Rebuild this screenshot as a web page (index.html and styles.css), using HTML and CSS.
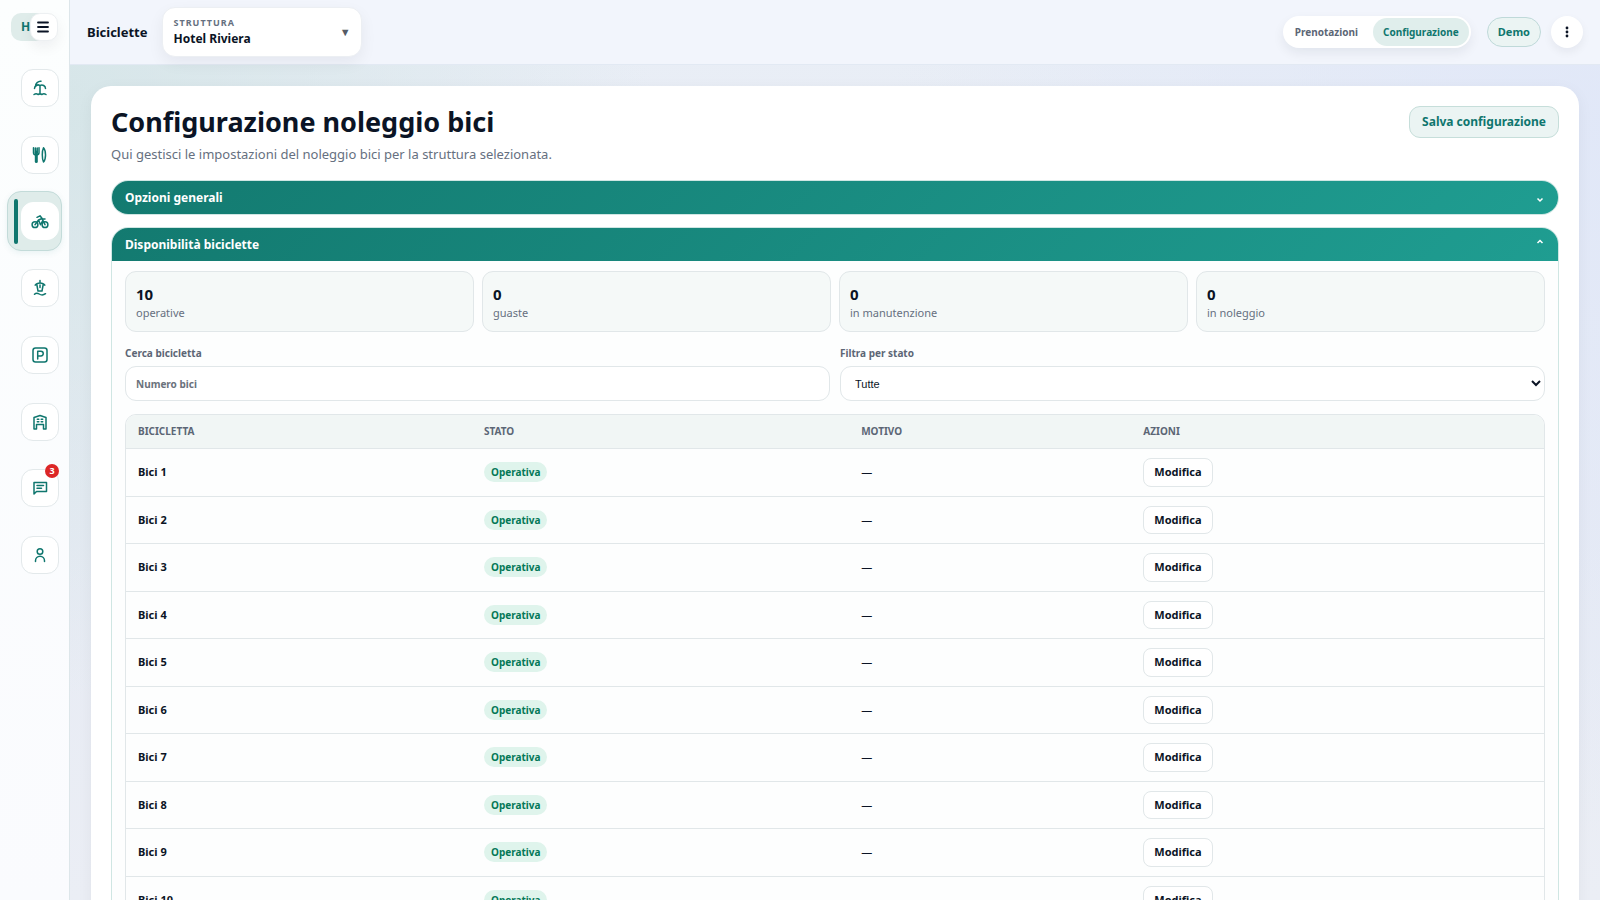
FILE: index.html
```html
<!DOCTYPE html>
<html lang="it">
<head>
<meta charset="utf-8">
<meta name="viewport" content="width=device-width, initial-scale=1">
<title>Configurazione noleggio bici</title>
<link rel="stylesheet" href="styles.css">
</head>
<body>
<div class="shell">
  <aside class="sidebar">
    <div class="brand">
      <span class="brand-mark">H</span>
      <button class="menu-btn" type="button" aria-label="Menu"><svg viewBox="0 0 12 12" width="12" height="12"><path d="M1 1.500h10M1 6h10M1 10.500h10" stroke="currentColor" stroke-width="1.8" stroke-linecap="round"/></svg></button>
    </div>
    <nav class="side-nav" aria-label="Sezioni">
      <a class="nav-item" href="#" aria-label="Spiaggia"><span class="nav-icon"><svg viewBox="0 0 18 18"><path d="M9 6.500V15M3 15.500c1.500-1 2.800-1 4 0 1.300-.8 2.700-.8 4 0 1.200-1 2.500-1 4 0M3.500 9.500C3.500 7 6.500 5 9 6.500c2.500-1.500 5.500.5 5.500 3M9 6.500C7.500 5.500 5.500 6 4.500 7.500 4 4.500 7.500 1.800 10 2.200"/></svg></span></a>
      <a class="nav-item" href="#" aria-label="Ristorante"><span class="nav-icon"><svg viewBox="0 0 18 18"><path d="M2.500 1.800v5c0 1.500 1 2.300 2.800 2.300S8 8.300 8 6.800v-5M4.400 2v5M6.200 2v5"/><path d="M5.300 6v9.500" stroke-width="3"/><path d="M12.500 1.800c-1.600 3-1.600 11 0 14.200 2.700-3 2.700-11.200 0-14.200z"/></svg></span></a>
      <a class="nav-item active" href="#" aria-label="Biciclette" aria-current="page"><span class="nav-icon"><svg viewBox="0 0 18 18"><circle cx="4" cy="12.700" r="2.900"/><circle cx="14" cy="12.700" r="2.900"/><path d="M4 12.700 7.500 8l2 4.700M7.500 8 11 6.500l3 6.200M9.500 12.700l2.300-4.200M6 5.300l3-1.500 2.500 3.200H14"/></svg></span></a>
      <a class="nav-item" href="#" aria-label="Piscina"><span class="nav-icon"><svg viewBox="0 0 18 18"><path d="M9 1.500v2.300M4.200 6.200C6 3.200 12 3.200 13.800 6.200M5.800 5.500 7 12h4l1.200-6.500M9 6v2.500M3.500 15.300c1.700-1.800 3.200-1.300 4.700-.3s3.700 1.800 6.300-.3"/></svg></span></a>
      <a class="nav-item" href="#" aria-label="Parcheggio"><span class="nav-icon"><svg viewBox="0 0 18 18"><rect x="2" y="2" width="14" height="14" rx="2.500"/><path d="M6.700 13V5.200h3.200a2.300 2.300 0 0 1 0 4.700H6.700"/></svg></span></a>
      <a class="nav-item" href="#" aria-label="Struttura"><span class="nav-icon"><svg viewBox="0 0 18 18"><path d="M3 16V4.500L9 2.500l6 2V16M3 16h2.500v-4.500h7V16H15M6.300 6.200h1.500M10.200 6.200h1.500M6.300 8.800h1.500M10.200 8.800h1.500"/></svg></span></a>
      <a class="nav-item" href="#" aria-label="Messaggi"><span class="nav-icon"><svg viewBox="0 0 18 18"><path d="M3 15V3.500h12.500v9H5.500L3 15zM6 6.500h6.500M6 9.300h4.500"/></svg><span class="badge">3</span></span></a>
      <a class="nav-item" href="#" aria-label="Profilo"><span class="nav-icon"><svg viewBox="0 0 18 18"><circle cx="9" cy="5.500" r="2.800"/><path d="M4.500 15.500v-.8a4.500 4.500 0 0 1 9 0v.8"/></svg></span></a>
    </nav>
  </aside>

  <div class="workspace">
    <header class="topbar">
      <strong class="section-name">Biciclette</strong>
      <div class="property">
        <label class="property-label" for="property">Struttura</label>
        <select class="property-select" id="property"><option>Hotel Riviera</option></select>
        <span class="property-arrow" aria-hidden="true">▼</span>
      </div>
      <div class="top-actions">
        <nav class="tabs" aria-label="Vista">
          <a class="tab" href="#">Prenotazioni</a>
          <a class="tab selected" href="#" aria-current="page">Configurazione</a>
        </nav>
        <button class="demo" type="button">Demo</button>
        <button class="more" type="button" aria-label="Altro"><svg viewBox="0 0 4 12" width="4" height="12" fill="currentColor"><circle cx="2" cy="2" r="1.400"/><circle cx="2" cy="6" r="1.400"/><circle cx="2" cy="10" r="1.400"/></svg></button>
      </div>
    </header>

    <main class="content">
      <section class="card">
        <div class="card-head">
          <div>
            <h1 class="title">Configurazione noleggio bici</h1>
            <p class="subtitle">Qui gestisci le impostazioni del noleggio bici per la struttura selezionata.</p>
          </div>
          <button class="save" type="button">Salva configurazione</button>
        </div>

        <section class="panel">
          <button class="panel-head" type="button" aria-expanded="false">Opzioni generali<svg class="chev chev-down" viewBox="0 0 8 6" width="8" height="6"><path d="M1.500 1.500 4 4l2.500-2.500"/></svg></button>
        </section>

        <section class="panel">
          <button class="panel-head" type="button" aria-expanded="true">Disponibilità biciclette<svg class="chev chev-up" viewBox="0 0 8 6" width="8" height="6"><path d="M1.500 4 4 1.500 6.500 4"/></svg></button>
          <div class="panel-body">
            <div class="stats">
              <div class="stat"><strong class="stat-num">10</strong><span class="stat-label">operative</span></div>
              <div class="stat"><strong class="stat-num">0</strong><span class="stat-label">guaste</span></div>
              <div class="stat"><strong class="stat-num">0</strong><span class="stat-label">in manutenzione</span></div>
              <div class="stat"><strong class="stat-num">0</strong><span class="stat-label">in noleggio</span></div>
            </div>
            <div class="filters">
              <div class="field">
                <label class="field-label" for="search">Cerca bicicletta</label>
                <input class="control" id="search" type="text" placeholder="Numero bici">
              </div>
              <div class="field">
                <label class="field-label" for="state">Filtra per stato</label>
                <select class="control control-select" id="state"><option>Tutte</option></select>
              </div>
            </div>
            <div class="table-wrap">
              <table class="bikes">
                <colgroup><col class="col-bike"><col class="col-state"><col class="col-reason"><col class="col-actions"></colgroup>
                <thead><tr><th>Bicicletta</th><th>Stato</th><th>Motivo</th><th>Azioni</th></tr></thead>
                <tbody>
                  <tr><td class="bike">Bici 1</td><td><span class="pill">Operativa</span></td><td>—</td><td><button class="edit" type="button">Modifica</button></td></tr>
                  <tr><td class="bike">Bici 2</td><td><span class="pill">Operativa</span></td><td>—</td><td><button class="edit" type="button">Modifica</button></td></tr>
                  <tr><td class="bike">Bici 3</td><td><span class="pill">Operativa</span></td><td>—</td><td><button class="edit" type="button">Modifica</button></td></tr>
                  <tr><td class="bike">Bici 4</td><td><span class="pill">Operativa</span></td><td>—</td><td><button class="edit" type="button">Modifica</button></td></tr>
                  <tr><td class="bike">Bici 5</td><td><span class="pill">Operativa</span></td><td>—</td><td><button class="edit" type="button">Modifica</button></td></tr>
                  <tr><td class="bike">Bici 6</td><td><span class="pill">Operativa</span></td><td>—</td><td><button class="edit" type="button">Modifica</button></td></tr>
                  <tr><td class="bike">Bici 7</td><td><span class="pill">Operativa</span></td><td>—</td><td><button class="edit" type="button">Modifica</button></td></tr>
                  <tr><td class="bike">Bici 8</td><td><span class="pill">Operativa</span></td><td>—</td><td><button class="edit" type="button">Modifica</button></td></tr>
                  <tr><td class="bike">Bici 9</td><td><span class="pill">Operativa</span></td><td>—</td><td><button class="edit" type="button">Modifica</button></td></tr>
                  <tr><td class="bike">Bici 10</td><td><span class="pill">Operativa</span></td><td>—</td><td><button class="edit" type="button">Modifica</button></td></tr>
                </tbody>
              </table>
            </div>
          </div>
        </section>
      </section>
    </main>
  </div>
</div>
</body>
</html>
```

FILE: styles.css
```css
:root {
  --teal: #0f766e;
  --ink: #0b1425;
  --muted: #667080;
  --line: #e1e7e9;
  --soft: #ebf4f3;
}

* { box-sizing: border-box; }

body {
  margin: 0;
  color: var(--ink);
  font: 12px/18px "Noto Sans", sans-serif;
}

button, input { font: inherit; color: inherit; }
button { cursor: pointer; }
a { color: inherit; text-decoration: none; }

.shell {
  display: flex;
  height: 100vh;
  overflow: hidden;
  background:
    radial-gradient(circle at 4% 12%, rgba(208, 227, 228, .75), transparent 34%),
    radial-gradient(circle at 100% 14%, rgba(224, 231, 248, .9), transparent 40%),
    linear-gradient(180deg, #e9eef6 0%, #e7ebf4 60%, #ebeef5 100%);
}

.sidebar {
  flex: none;
  width: 70px;
  border-right: 1px solid #dde6ea;
  background: linear-gradient(180deg, #fcfefe, #fafbfe);
}

.brand {
  display: flex;
  align-items: center;
  height: 28px;
  margin: 13px 0 0 11px;
}

.brand-mark {
  width: 28px;
  padding-left: 10px;
  border-radius: 10px 0 0 10px;
  background: #dfecea;
  color: var(--teal);
  font-size: 12px;
  font-weight: 700;
  line-height: 28px;
}

.menu-btn {
  display: grid;
  place-items: center;
  width: 28px;
  height: 28px;
  margin-left: -9px;
  padding: 0 2px 0 0;
  border: 1px solid #edf0f2;
  border-radius: 10px;
  background: #fff;
  box-shadow: 0 6px 14px rgba(15, 23, 42, .06);
}

.side-nav {
  display: flex;
  flex-direction: column;
  justify-content: space-between;
  height: 527px;
  margin: 17px 7px 0;
}

.nav-item {
  display: flex;
  align-items: center;
  justify-content: flex-end;
  height: 60px;
  padding-right: 2px;
  border: 1px solid transparent;
  border-radius: 14px;
}

.nav-item.active {
  justify-content: space-between;
  padding-left: 6px;
  border-color: #c3dbd9;
  background: #dfecea;
  box-shadow: 0 2px 6px rgba(15, 118, 110, .08);
}

.nav-item.active::before {
  width: 4px;
  height: 45px;
  border-radius: 4px;
  background: var(--teal);
  content: "";
}

.nav-icon {
  position: relative;
  display: grid;
  place-items: center;
  width: 38px;
  height: 38px;
  border: 1px solid #e3e9eb;
  border-radius: 12px;
  background: #fff;
}

.active .nav-icon { border-color: #fff; }

.nav-icon svg {
  width: 18px;
  height: 18px;
  fill: none;
  stroke: var(--teal);
  stroke-width: 1.5;
  stroke-linecap: round;
  stroke-linejoin: round;
}

.badge {
  position: absolute;
  top: -6px;
  right: -1px;
  width: 14px;
  height: 14px;
  border-radius: 7px;
  background: #dc2626;
  color: #fff;
  font-size: 9px;
  font-weight: 700;
  line-height: 14px;
  text-align: center;
}

.workspace {
  display: flex;
  flex: 1;
  flex-direction: column;
  min-width: 0;
}

.topbar {
  display: flex;
  flex: none;
  align-items: center;
  gap: 14px;
  height: 65px;
  padding: 0 17px;
  border-bottom: 1px solid #e2e9f3;
  background: #f2f5fc;
}

.section-name { font-size: 13px; }

.property {
  display: grid;
  grid-template-columns: 1fr auto;
  align-items: center;
  width: 200px;
  padding: 8px 10px 8px 11px;
  border: 1px solid #eceff3;
  border-radius: 13px;
  background: #fff;
  box-shadow: 0 6px 16px rgba(15, 23, 42, .06);
}

.property-label {
  color: var(--muted);
  font-size: 9px;
  font-weight: 700;
  letter-spacing: 1px;
  line-height: 14px;
  text-transform: uppercase;
}

.property-select {
  grid-row: 2;
  padding: 0;
  border: 0;
  appearance: none;
  background: none;
  color: var(--ink);
  font: 700 12px/18px "Noto Sans", sans-serif;
}

.property-arrow {
  grid-row: 1 / 3;
  grid-column: 2;
  color: #555c66;
  font-size: 11px;
}

.top-actions {
  display: flex;
  align-items: center;
  margin-left: auto;
}

.tabs {
  display: flex;
  gap: 5px;
  padding: 2px;
  border-radius: 17px;
  background: #fff;
  box-shadow: 0 5px 12px rgba(15, 23, 42, .07);
}

.tab {
  padding: 5px 10px;
  border-radius: 14px;
  color: #5c6675;
  font-size: 10px;
  font-weight: 700;
}

.tab.selected { background: #e0eeec; color: var(--teal); }

.demo {
  height: 30px;
  margin: 0 10px 0 16px;
  padding: 0 10px;
  border: 1px solid #bfd9d9;
  border-radius: 15px;
  background: var(--soft);
  color: var(--teal);
  font-size: 11px;
  font-weight: 700;
}

.more {
  display: grid;
  place-items: center;
  width: 32px;
  height: 32px;
  padding: 0;
  border: 0;
  border-radius: 16px;
  background: #fff;
  box-shadow: 0 4px 10px rgba(15, 23, 42, .06);
}

.content {
  flex: 1;
  min-height: 0;
  padding: 21px;
  overflow-y: auto;
  scrollbar-width: none;
}

.card {
  display: grid;
  gap: 12px;
  padding: 20px;
  border-radius: 20px;
  background: #fff;
  box-shadow: 0 4px 16px rgba(15, 23, 42, .05);
}

.card-head {
  display: flex;
  align-items: flex-start;
  justify-content: space-between;
  margin-bottom: 4px;
}

.title {
  margin: 0;
  font-size: 27px;
  font-weight: 700;
  line-height: 32px;
}

.subtitle {
  margin: 6px 0 0;
  color: var(--muted);
  font-size: 13px;
  line-height: 20px;
}

.save {
  height: 32px;
  padding: 0 12px;
  border: 1px solid #c6deda;
  border-radius: 11px;
  background: var(--soft);
  color: var(--teal);
  font-weight: 700;
}

.panel {
  overflow: hidden;
  border: 1px solid #cfe6e3;
  border-radius: 17px;
  background: #fdfefe;
}

.panel-head {
  display: flex;
  align-items: center;
  justify-content: space-between;
  width: 100%;
  height: 33px;
  padding: 0 14px 0 13px;
  border: 0;
  background: linear-gradient(135deg, #137a70, #1f9d91);
  color: #fff;
  font-weight: 700;
}

.chev {
  fill: none;
  stroke: currentColor;
  stroke-width: 1.5;
}

.chev-down { margin-top: 5px; }
.chev-up { margin-bottom: 5px; }

.panel-body {
  display: grid;
  gap: 12px;
  padding: 10px 13px;
}

.stats {
  display: grid;
  grid-template-columns: repeat(4, 1fr);
  gap: 8px;
}

.stat {
  display: grid;
  padding: 12px 10px 9px;
  border: 1px solid var(--line);
  border-radius: 11px;
  background: #f5f9f8;
}

.stat-num { font-size: 15px; line-height: 20px; }
.stat-label { color: var(--muted); font-size: 11px; }

.filters {
  display: grid;
  grid-template-columns: 1fr 1fr;
  gap: 10px;
}

.field { display: grid; gap: 4px; }

.field-label {
  color: #5c6675;
  font-size: 10px;
  font-weight: 700;
}

.control {
  width: 100%;
  height: 35px;
  padding: 0 10px;
  border: 1px solid var(--line);
  border-radius: 11px;
  background: #fff;
  font-size: 10px;
  font-weight: 700;
}

.control::placeholder { color: #6b727c; }

.control-select {
  padding: 0 0 0 10px;
  color: var(--ink);
  font: 11px "Liberation Sans", Arial, sans-serif;
}

.table-wrap {
  overflow: hidden;
  margin-top: 1px;
  border: 1px solid var(--line);
  border-radius: 11px;
}

.bikes {
  width: 100%;
  border-collapse: collapse;
  table-layout: fixed;
}

.col-bike { width: 24.4%; }
.col-state { width: 26.6%; }
.col-reason { width: 19.9%; }
.col-actions { width: 29.1%; }

.bikes th {
  padding: 7px 12px 8px;
  background: #f1f6f5;
  color: #5c6675;
  font-size: 10px;
  text-align: left;
  text-transform: uppercase;
}

.bikes td {
  padding: 9px 12px;
  border-top: 1px solid var(--line);
  font-size: 11px;
}

.bikes .bike { font-weight: 700; }

.pill {
  display: inline-block;
  padding: 1px 7px;
  border-radius: 10px;
  background: #dff4ec;
  color: #047857;
  font-size: 10px;
  font-weight: 700;
}

.edit {
  display: block;
  padding: 5px 10px;
  border: 1px solid var(--line);
  border-radius: 8px;
  background: #fff;
  font-size: 11px;
  font-weight: 700;
  line-height: 1.5;
}
```
